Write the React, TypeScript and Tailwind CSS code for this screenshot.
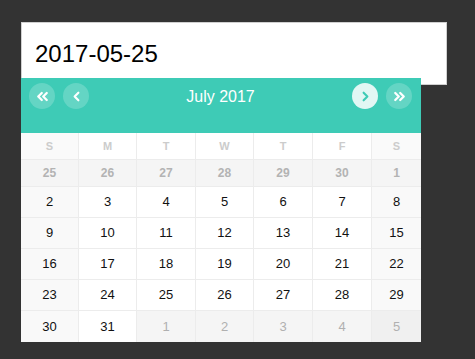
import { ChevronLeft, ChevronRight, ChevronsLeft, ChevronsRight } from "lucide-react"

const weekdays = ["S", "M", "T", "W", "T", "F", "S"]

type Day = { n: number; kind: "prev" | "cur" | "next" }

// first row of the grid is drawn muted, July 1 included (as in the widget)
const days: Day[] = [
  ...[25, 26, 27, 28, 29, 30, 1].map((n) => ({ n, kind: "prev" as const })),
  ...Array.from({ length: 30 }, (_, i) => ({ n: i + 2, kind: "cur" as const })),
  ...[1, 2, 3, 4, 5].map((n) => ({ n, kind: "next" as const })),
]

const colW = ["w-[58px]", "w-[58px]", "w-[59px]", "w-[58px]", "w-[59px]", "w-[59px]", "w-[49px]"]

function cellClass(d: Day, col: number) {
  const weekend = col === 0 || col === 6
  if (d.kind === "prev") return "h-[27px] bg-[#f5f5f5] text-[12px] font-bold text-[#b3b3b3]"
  if (d.kind === "next")
    return `h-[31px] text-[13px] text-[#b0b0b0] ${col === 6 ? "bg-[#f0f0f0]" : "bg-[#f5f5f5]"}`
  return `h-[31px] text-[13px] text-[#111] ${weekend ? "bg-[#f9f9f9]" : "bg-white"}`
}

export default function App() {
  const rows: Day[][] = []
  for (let i = 0; i < days.length; i += 7) rows.push(days.slice(i, i + 7))

  return (
    <div
      className="relative w-[475px] h-[359px] bg-[#333333] pt-[22px] pl-[21px]"
      style={{ fontFamily: '"Liberation Sans", Arial, sans-serif' }}
    >
      {/* input */}
      <div className="w-[426px] h-[63px] bg-white border border-[#d0d0d0] flex items-center pl-[13px] text-[24px] text-black">
        2017-05-25
      </div>

      {/* dropdown calendar */}
      <div className="absolute left-[21px] top-[78px] w-[400px] bg-white">
        <div className="h-[55px] bg-[#3ecbb6] flex items-start pt-[5px] pl-[8px] pr-[9px]">
          <div className="flex gap-[8px]">
            <button className="w-[26px] h-[26px] rounded-full bg-white/20 flex items-center justify-center text-white">
              <ChevronsLeft size={17} strokeWidth={3.2} />
            </button>
            <button className="w-[26px] h-[26px] rounded-full bg-white/20 flex items-center justify-center text-white">
              <ChevronLeft size={15} strokeWidth={3.4} />
            </button>
          </div>
          <div className="flex-1 h-[28px] flex items-center justify-center text-white text-[16px]">July 2017</div>
          <div className="flex gap-[8px]">
            <button className="w-[26px] h-[26px] rounded-full bg-white/85 flex items-center justify-center text-[#3ecbb6]">
              <ChevronRight size={15} strokeWidth={3.4} />
            </button>
            <button className="w-[26px] h-[26px] rounded-full bg-white/20 flex items-center justify-center text-white">
              <ChevronsRight size={17} strokeWidth={3.2} />
            </button>
          </div>
        </div>

        {/* weekday row */}
        <div className="flex">
          {weekdays.map((w, i) => (
            <div
              key={i}
              className={`${colW[i]} h-[27px] flex items-center justify-center border-b border-[#ececec] text-[11px] font-bold text-[#cccccc] ${
                i < 6 ? "border-r" : ""
              } ${i === 0 || i === 6 ? "bg-[#fafafa]" : "bg-white"}`}
            >
              {w}
            </div>
          ))}
        </div>

        {rows.map((row, r) => (
          <div key={r} className="flex">
            {row.map((d, i) => (
              <div
                key={i}
                className={`${colW[i]} flex items-center justify-center border-[#ececec] ${
                  r < rows.length - 1 ? "border-b" : ""
                } ${i < 6 ? "border-r" : ""} ${cellClass(d, i)}`}
              >
                {d.n}
              </div>
            ))}
          </div>
        ))}
      </div>
    </div>
  )
}
